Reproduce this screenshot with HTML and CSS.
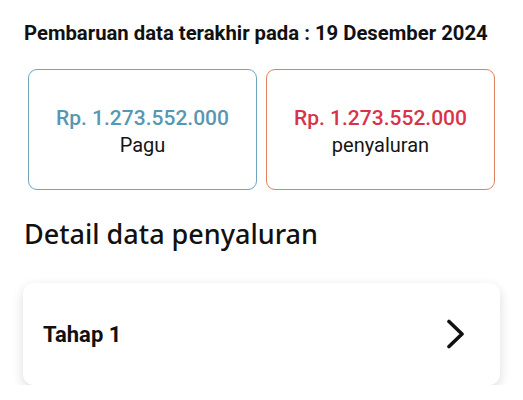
FILE: index.html
```html
<!DOCTYPE html>
<html lang="id">
<head>
<meta charset="utf-8">
<link rel="stylesheet" href="styles.css">
</head>
<body>
<main class="page">
  <p class="updated">Pembaruan data terakhir pada : 19 Desember 2024</p>
  <div class="summary">
    <div class="stat stat-pagu">
      <span class="amount">Rp. 1.273.552.000</span>
      <span class="label">Pagu</span>
    </div>
    <div class="stat stat-salur">
      <span class="amount">Rp. 1.273.552.000</span>
      <span class="label">penyaluran</span>
    </div>
  </div>
  <h2 class="section-title">Detail data penyaluran</h2>
  <div class="item">
    <span class="item-title">Tahap 1</span>
    <svg class="chevron" width="20" height="30" viewBox="0 0 20 30"><path d="M3 2.5 L16 15 L3 27.5" fill="none" stroke="#111" stroke-width="3.6" stroke-linecap="round" stroke-linejoin="round"/></svg>
  </div>
</main>
</body>
</html>
```
FILE: styles.css
```css
* { box-sizing: border-box; }
html, body { margin: 0; padding: 0; background: #fff; }
body { font-family: Roboto, "Noto Sans", sans-serif; color: #111; }
.page { padding: 21px 23px 0 23px; }
.updated { margin: 0; font-size: 20.3px; font-weight: 700; line-height: 24px; padding-left: 1px; white-space: nowrap; }
.summary { display: flex; gap: 9px; margin: 24px 5px 0 5px; }
.stat { width: 229px; height: 121px; border-radius: 9px; border: 1.5px solid; display: flex; flex-direction: column; align-items: center; justify-content: center; padding-top: 5px; }
.stat-pagu { border-color: #6fa5ba; }
.stat-salur { border-color: #e0825f; }
.amount { font-size: 21px; font-weight: 500; line-height: 26px; }
.stat-pagu .amount { color: #5897b2; }
.stat-salur .amount { color: #d8334a; }
.label { font-size: 20px; line-height: 28px; color: #151515; }
.section-title { margin: 27px 0 0 1px; font-family: "Noto Sans", sans-serif; font-weight: 500; font-size: 27px; line-height: 34px; }
.item { margin-top: 32px; height: 102px; border-radius: 11px; background: #fff; box-shadow: 0 4px 12px rgba(0,0,0,0.14); display: flex; align-items: center; justify-content: space-between; padding: 0 34px 0 20px; width: 477px; }
.item-title { font-size: 22px; font-weight: 700; }
.chevron { display: block; }
```
